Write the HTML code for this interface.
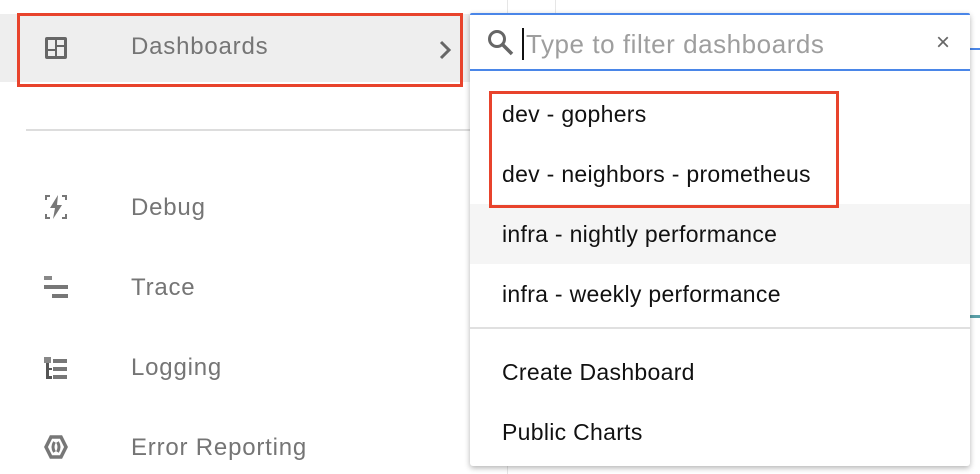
<!DOCTYPE html>
<html><head><style>
body{margin:0;width:980px;height:474px;overflow:hidden;background:#fff;font-family:"Liberation Sans",Roboto,sans-serif;position:relative}
.a{position:absolute}
.lbl{position:absolute;left:131px;font-size:24px;color:#757575;line-height:30px;letter-spacing:0.8px}
.it{position:absolute;left:502px;font-size:23px;color:#111;line-height:28px;letter-spacing:0.3px}
</style></head><body>
<div class="a" style="left:507px;top:0;width:1px;height:474px;background:#e6e6e6"></div>
<div class="a" style="left:555px;top:0;width:1px;height:14px;background:#e6e6e6"></div>
<div class="a" style="left:970px;top:48px;width:10px;height:2px;background:#4a86e8"></div>
<div class="a" style="left:970px;top:315px;width:10px;height:3px;background:#5aa0a8"></div>
<div class="a" style="left:0;top:14px;width:470px;height:68px;background:#eeeeee"></div>
<svg class="a" style="left:45px;top:37px" width="22" height="22" viewBox="0 0 22 22"><rect x="0" y="0" width="22" height="22" rx="2" fill="#666"/><rect x="3" y="3" width="7" height="9" fill="#eee"/><rect x="12" y="3" width="7" height="5" fill="#eee"/><rect x="3" y="14" width="7" height="5" fill="#eee"/><rect x="12" y="10" width="7" height="9" fill="#eee"/></svg>
<div class="lbl" style="top:32px">Dashboards</div>
<svg class="a" style="left:438px;top:39px" width="14" height="22" viewBox="0 0 14 22"><path d="M3 3 L11 11 L3 19" stroke="#666" stroke-width="3" fill="none"/></svg>
<div class="a" style="left:17px;top:13px;width:440px;height:68px;border:3px solid #e8432c"></div>
<div class="a" style="left:26px;top:129px;width:444px;height:2px;background:#ddd"></div>
<svg class="a" style="left:44px;top:194px" width="24" height="26" viewBox="0 0 24 26"><path d="M1 1h5v2H3v3H1zM23 1h-5v2h3v3h2zM1 25h5v-2H3v-3H1zM23 25h-5v-2h3v-3h2z" fill="#777"/><path d="M14 1 L6 14 H11 L9 25 L18 11 H13 Z" fill="#777"/></svg>
<div class="lbl" style="top:193px">Debug</div>
<svg class="a" style="left:44px;top:276px" width="24" height="24" viewBox="0 0 24 24"><rect x="0" y="0" width="8" height="4" fill="#888"/><rect x="0" y="9" width="24" height="4" fill="#777"/><rect x="8" y="18" width="16" height="4" fill="#777"/></svg>
<div class="lbl" style="top:273px">Trace</div>
<svg class="a" style="left:44px;top:357px" width="24" height="24" viewBox="0 0 24 24"><rect x="0" y="0" width="7" height="6" fill="#888"/><rect x="2" y="6" width="3" height="16" fill="#555"/><rect x="2" y="11" width="6" height="2" fill="#555"/><rect x="2" y="19" width="6" height="3" fill="#555"/><rect x="9" y="2" width="14" height="4" fill="#777"/><rect x="9" y="10" width="14" height="4" fill="#777"/><rect x="9" y="18" width="14" height="4" fill="#777"/></svg>
<div class="lbl" style="top:353px">Logging</div>
<svg class="a" style="left:44px;top:435px" width="24" height="24" viewBox="0 0 24 24"><path d="M7 2h10l5 10-5 10H7L2 12z" fill="none" stroke="#777" stroke-width="3.5"/><path d="M10.5 7 Q7.5 12 10.5 17 M13.5 7 Q16.5 12 13.5 17" stroke="#777" stroke-width="3" fill="none"/></svg>
<div class="lbl" style="top:433px">Error Reporting</div>

<div class="a" style="left:470px;top:13px;width:500px;height:453px;background:#fff;border-radius:3px;box-shadow:0 2px 6px rgba(0,0,0,.3)"></div>
<div class="a" style="left:470px;top:13px;width:500px;height:2px;background:#4a86e8;border-radius:3px 3px 0 0"></div>
<div class="a" style="left:470px;top:69px;width:500px;height:2px;background:#4a86e8"></div>
<svg class="a" style="left:487px;top:29px" width="28" height="28" viewBox="0 0 28 28"><circle cx="10" cy="10" r="7.5" fill="none" stroke="#666" stroke-width="3"/><path d="M15.5 15.5 L25 25" stroke="#666" stroke-width="3.5"/></svg>
<div class="a" style="left:522px;top:28px;width:2px;height:32px;background:#111"></div>
<div class="a" style="left:526px;top:28px;font-size:26px;color:#9e9e9e;line-height:32px;letter-spacing:0.55px">Type to filter dashboards</div>
<div class="a" style="left:936px;top:28px;font-size:24px;color:#666;line-height:30px">×</div>
<div class="it" style="top:100px">dev - gophers</div>
<div class="it" style="top:160px">dev - neighbors - prometheus</div>
<div class="a" style="left:470px;top:204px;width:500px;height:60px;background:#f5f5f5"></div>
<div class="it" style="top:220px">infra - nightly performance</div>
<div class="it" style="top:280px">infra - weekly performance</div>
<div class="a" style="left:470px;top:327px;width:500px;height:2px;background:#e0e0e0"></div>
<div class="it" style="top:358px">Create Dashboard</div>
<div class="it" style="top:418px">Public Charts</div>
<div class="a" style="left:489px;top:91px;width:344px;height:111px;border:3px solid #e8432c"></div>
</body></html>
